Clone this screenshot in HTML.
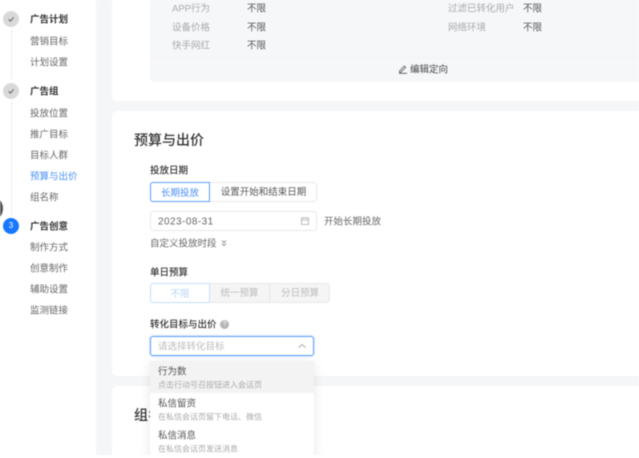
<!DOCTYPE html>
<html lang="zh"><head><meta charset="utf-8">
<style>
html,body{margin:0;padding:0;background:#fff}
body{width:639px;height:458px;overflow:hidden;position:relative;font-family:"Liberation Sans","Noto Sans CJK SC",sans-serif}
#w{position:absolute;left:0;top:0;width:639px;height:455px;overflow:hidden;background:#f5f6f8;filter:blur(.5px)}
#w div,#w span.a{position:absolute;box-sizing:border-box}
.t{white-space:nowrap;line-height:14px;height:14px;font-size:9.5px;color:#666;transform:translateY(1.6px)}
.ti{transform:none}
.h{font-weight:700;color:#333}
.l{color:#aaa}.v{color:#555}
.lab{font-size:9.5px;color:#333;font-weight:500}
.c{text-align:center}
.s{font-size:8px;color:#aaa}
</style></head><body>
<div id="w">
<div style="left:0;top:0;width:96px;height:455px;background:#fff"></div>
<div style="left:112px;top:-20px;width:540px;height:121px;background:#fff;border-radius:5px"></div>
<div style="left:112px;top:111px;width:540px;height:265px;background:#fff;border-radius:5px"></div>
<div style="left:112px;top:386px;width:540px;height:90px;background:#fff;border-radius:5px"></div>

<!-- sidebar -->
<div style="left:11px;top:30px;width:1px;height:49px;background:#ececec"></div>
<div style="left:11px;top:102px;width:1px;height:114px;background:#ececec"></div>
<div style="left:3px;top:11px;width:16px;height:16px;border-radius:50%;background:#d9d9d9"></div>
<div style="left:3px;top:83px;width:16px;height:16px;border-radius:50%;background:#d9d9d9"></div>
<svg style="position:absolute;left:3px;top:11px" width="16" height="16"><path d="M5.500 8.200l2 2 3.200-4" fill="none" stroke="#666" stroke-width="1"/></svg>
<svg style="position:absolute;left:3px;top:83px" width="16" height="16"><path d="M5.500 8.200l2 2 3.200-4" fill="none" stroke="#666" stroke-width="1"/></svg>
<div style="left:3px;top:218px;width:16px;height:16px;border-radius:50%;background:#1677ff;color:#fff;font-size:8px;line-height:16px;text-align:center">3</div>
<div style="left:-10px;top:199px;width:12.500px;height:19px;border-radius:50%;background:#555"></div>
<div class="t h" style="left:30px;top:12px">广告计划</div>
<div class="t" style="left:30px;top:34px">营销目标</div>
<div class="t" style="left:30px;top:55px">计划设置</div>
<div class="t h" style="left:30px;top:84px">广告组</div>
<div class="t" style="left:30px;top:106px">投放位置</div>
<div class="t" style="left:30px;top:127px">推广目标</div>
<div class="t" style="left:30px;top:148px">目标人群</div>
<div class="t" style="left:30px;top:169px;color:#4a90f8">预算与出价</div>
<div class="t" style="left:30px;top:190px">组名称</div>
<div class="t h" style="left:30px;top:219px">广告创意</div>
<div class="t" style="left:30px;top:240px">制作方式</div>
<div class="t" style="left:30px;top:261px">创意制作</div>
<div class="t" style="left:30px;top:282px">辅助设置</div>
<div class="t" style="left:30px;top:303px">监测链接</div>

<!-- targeting panel -->
<div style="left:150px;top:-10px;width:500px;height:92px;background:#f6f7f9;border-radius:4px"></div>
<div style="left:150px;top:57px;width:489px;height:1px;background:#f2f3f5"></div>
<div class="t l" style="left:172px;top:1px">APP行为</div>
<div class="t v" style="left:247px;top:1px">不限</div>
<div class="t l" style="left:172px;top:20px">设备价格</div>
<div class="t v" style="left:247px;top:20px">不限</div>
<div class="t l" style="left:172px;top:38px">快手网红</div>
<div class="t v" style="left:247px;top:38px">不限</div>
<div class="t l" style="left:448px;top:1px">过滤已转化用户</div>
<div class="t v" style="left:523px;top:1px">不限</div>
<div class="t l" style="left:448px;top:20px">网络环境</div>
<div class="t v" style="left:523px;top:20px">不限</div>
<svg style="position:absolute;left:398px;top:64px" width="10" height="10"><path d="M1.500 7l4.800-5 1.400 1.300-5 5H1.500zM1 9.300h8" fill="none" stroke="#555" stroke-width=".8"/></svg>
<div class="t" style="left:410px;top:62px;color:#444">编辑定向</div>

<!-- budget -->
<div class="t ti" style="left:134px;top:132px;font-size:14px;height:16px;line-height:16px;color:#333;font-weight:500">预算与出价</div>
<div class="t lab" style="left:150px;top:163px">投放日期</div>
<div style="left:150px;top:182px;width:167px;height:20px;border:1px solid #e8e8e8;border-radius:3px"></div>
<div class="t c ti" style="left:150px;top:182px;width:60px;height:20px;line-height:19px;padding-top:1px;border:1px solid #5b9dfb;border-radius:3px 0 0 3px;color:#4a90f8;background:#fff">长期投放</div>
<div class="t c ti" style="left:210px;top:183px;width:107px;height:20px;line-height:20px;color:#555">设置开始和结束日期</div>
<div style="left:150px;top:211px;width:167px;height:20px;border:1px solid #e8e8e8;border-radius:3px"></div>
<div class="t" style="left:158px;top:214px;color:#666;font-size:10px;letter-spacing:.45px">2023-08-31</div>
<svg style="position:absolute;left:300px;top:216px" width="10" height="10"><path d="M1.500 2h7v6.500h-7zM1.500 4h7M3.500 1v1.500M6.500 1v1.500" fill="none" stroke="#aaa" stroke-width=".8"/></svg>
<div class="t" style="left:324px;top:214px;color:#666">开始长期投放</div>
<div class="t" style="left:150px;top:236px;color:#666">自定义投放时段</div>
<svg style="position:absolute;left:220px;top:239px" width="8" height="8"><path d="M2 1.500l2 2 2-2M2 4.500l2 2 2-2" fill="none" stroke="#777" stroke-width=".8"/></svg>

<div class="t lab" style="left:150px;top:265px">单日预算</div>
<div style="left:209px;top:283px;width:121px;height:20px;background:#f5f5f5;border:1px solid #e8e8e8;border-radius:0 3px 3px 0"></div>
<div style="left:269px;top:283px;width:1px;height:20px;background:#e8e8e8"></div>
<div class="t c ti" style="left:150px;top:283px;width:60px;height:20px;line-height:19px;padding-top:1px;border:1px solid #c4e1fb;border-radius:3px 0 0 3px;color:#b5d6f8;background:#fff">不限</div>
<div class="t c ti" style="left:210px;top:284px;width:59px;height:20px;line-height:20px;color:#bbb">统一预算</div>
<div class="t c ti" style="left:270px;top:284px;width:60px;height:20px;line-height:20px;color:#bbb">分日预算</div>

<div class="t lab" style="left:150px;top:317px">转化目标与出价</div>
<div style="left:220px;top:320px;width:9px;height:9px;border-radius:50%;background:#b5b5b5;color:#fff;font-size:7px;line-height:9px;text-align:center">?</div>
<div style="left:150px;top:336px;width:164px;height:20px;border:1px solid #5b9dfb;border-radius:3px;box-shadow:0 0 2px rgba(90,160,250,.5);background:#fff"></div>
<div class="t" style="left:158px;top:339px;color:#bbb">请选择转化目标</div>
<svg style="position:absolute;left:297px;top:342px" width="10" height="8"><path d="M1.500 5.500l3.500-3 3.500 3" fill="none" stroke="#aaa" stroke-width="1"/></svg>

<!-- group title -->
<div class="t ti" style="left:134px;top:407px;font-size:14px;height:16px;line-height:16px;color:#333;font-weight:500">组名称</div>

<!-- dropdown -->
<div style="left:150px;top:361px;width:164px;height:110px;background:#fff;box-shadow:0 2px 10px rgba(0,0,0,.1)"></div>
<div style="left:150px;top:361px;width:164px;height:32px;background:#f3f3f3"></div>
<div class="t" style="left:158px;top:364px;color:#555">行为数</div>
<div class="t s" style="left:158px;top:377px">点击行动号召按钮进入会话页</div>
<div class="t" style="left:158px;top:396px;color:#555">私信留资</div>
<div class="t s" style="left:158px;top:409px">在私信会话页留下电话、微信</div>
<div class="t" style="left:158px;top:428px;color:#555">私信消息</div>
<div class="t s" style="left:158px;top:441px">在私信会话页发送消息</div>
</div>
</body></html>
